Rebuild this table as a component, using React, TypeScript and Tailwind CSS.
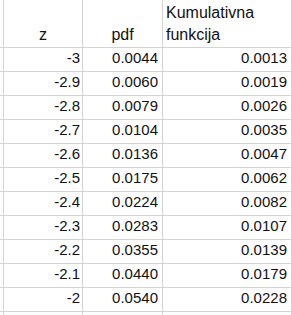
const rows: [string, string, string][] = [
  ['-3', '0.0044', '0.0013'],
  ['-2.9', '0.0060', '0.0019'],
  ['-2.8', '0.0079', '0.0026'],
  ['-2.7', '0.0104', '0.0035'],
  ['-2.6', '0.0136', '0.0047'],
  ['-2.5', '0.0175', '0.0062'],
  ['-2.4', '0.0224', '0.0082'],
  ['-2.3', '0.0283', '0.0107'],
  ['-2.2', '0.0355', '0.0139'],
  ['-2.1', '0.0440', '0.0179'],
  ['-2', '0.0540', '0.0228'],
]

const cell = 'border-r border-b border-[#d4d4d4] flex items-end shrink-0'

export default function App() {
  return (
    <div
      className="w-[292px] h-[315px] overflow-hidden bg-white text-[15px] text-[#111]"
      style={{ fontFamily: '"Liberation Sans", Arial, sans-serif' }}
    >
      {/* header */}
      <div className="flex h-[48px] text-[16px] leading-[22px]">
        <div className={`${cell} w-[4px]`} />
        <div className={`${cell} w-[79px] justify-center pb-[1px]`}>z</div>
        <div className={`${cell} w-[80px] justify-center pb-[1px]`}>pdf</div>
        <div className={`${cell} w-[129px] pl-[3px] pb-[1px]`}>
          Kumulativna
          <br />
          funkcija
        </div>
      </div>

      {rows.map(([z, pdf, cdf]) => (
        <div key={z} className="flex h-[24px]">
          <div className={`${cell} w-[4px]`} />
          <div className={`${cell} w-[79px] justify-end pr-[2px] pb-[2px]`}>{z}</div>
          <div className={`${cell} w-[80px] justify-end pr-[4px] pb-[2px]`}>{pdf}</div>
          <div className={`${cell} w-[129px] justify-end pr-[4px] pb-[2px]`}>{cdf}</div>
        </div>
      ))}

      {/* empty row below, cut by the window */}
      <div className="flex h-[24px]">
        <div className={`${cell} w-[4px]`} />
        <div className={`${cell} w-[79px]`} />
        <div className={`${cell} w-[80px]`} />
        <div className={`${cell} w-[129px]`} />
      </div>
    </div>
  )
}
